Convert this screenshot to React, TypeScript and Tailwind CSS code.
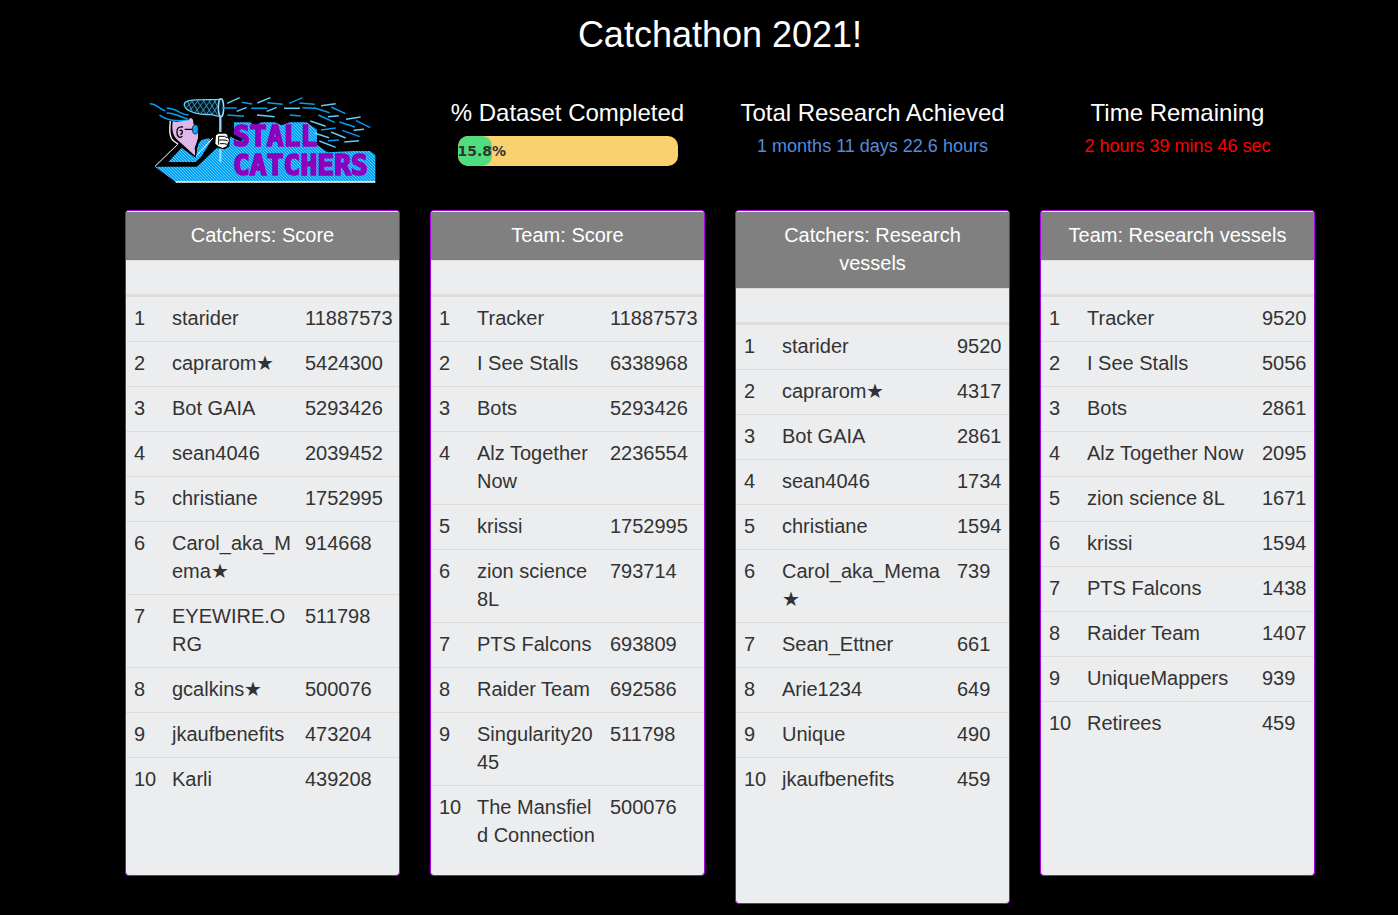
type Row = [name: string, value: number];

interface Board {
  title: string;
  valueColumn: string;
  rows: Row[];
}

const boards: Board[] = [
  {
    title: "Catchers: Score",
    valueColumn: "w-[102px]",
    rows: [
      ["starider", 11887573],
      ["caprarom★", 5424300],
      ["Bot GAIA", 5293426],
      ["sean4046", 2039452],
      ["christiane", 1752995],
      ["Carol_aka_Mema★", 914668],
      ["EYEWIRE.ORG", 511798],
      ["gcalkins★", 500076],
      ["jkaufbenefits", 473204],
      ["Karli", 439208],
    ],
  },
  {
    title: "Team: Score",
    valueColumn: "w-[102px]",
    rows: [
      ["Tracker", 11887573],
      ["I See Stalls", 6338968],
      ["Bots", 5293426],
      ["Alz Together Now", 2236554],
      ["krissi", 1752995],
      ["zion science 8L", 793714],
      ["PTS Falcons", 693809],
      ["Raider Team", 692586],
      ["Singularity2045", 511798],
      ["The Mansfield Connection", 500076],
    ],
  },
  {
    title: "Catchers: Research vessels",
    valueColumn: "w-[60px]",
    rows: [
      ["starider", 9520],
      ["caprarom★", 4317],
      ["Bot GAIA", 2861],
      ["sean4046", 1734],
      ["christiane", 1594],
      ["Carol_aka_Mema★", 739],
      ["Sean_Ettner", 661],
      ["Arie1234", 649],
      ["Unique", 490],
      ["jkaufbenefits", 459],
    ],
  },
  {
    title: "Team: Research vessels",
    valueColumn: "w-[60px]",
    rows: [
      ["Tracker", 9520],
      ["I See Stalls", 5056],
      ["Bots", 2861],
      ["Alz Together Now", 2095],
      ["zion science 8L", 1671],
      ["krissi", 1594],
      ["PTS Falcons", 1438],
      ["Raider Team", 1407],
      ["UniqueMappers", 939],
      ["Retirees", 459],
    ],
  },
];

function Logo() {
  return (
    <svg viewBox="0 0 750 330" width="250" height="110" role="img" aria-label="Stall Catchers" className="shrink-0">
      <defs>
        <pattern id="hatch" width="9" height="9" patternUnits="userSpaceOnUse">
          <rect width="9" height="9" fill="#009ff8" />
          <path d="M-3 -3L12 12M-3 6L3 12M6 -3L12 3" stroke="#62cbf3" strokeWidth="3" />
        </pattern>
      </defs>
      {/* shaded body and backdrop */}
      <path
        d="M45 245L112 180L165 217L176 167L205 160L222 172L245 186L262 184L268 150L305 172L282 150V112H330L345 122L365 112H405L425 121L450 112H500L531 134V180L562 202L640 198H690L706 211V291H107Z"
        fill="url(#hatch)"
      />
      <path d="M107 291H706" stroke="#fff" strokeWidth="4" />
      <path d="M262 144L282 148L310 160L303 170L266 153Z" fill="#000" />
      {/* flowing hair */}
      <g fill="none" stroke="#079ff0" strokeWidth="4.5" strokeLinecap="round">
        <path d="M31 56C48 55 50 67 74 77" />
        <path d="M82 70C106 68 118 88 144 90" />
        <path d="M82 84C105 82 116 97 142 101" />
        <path d="M60 91C80 105 99 109 146 106" />
      </g>
      {/* arm */}
      <path d="M112 178L45 245H171L242 178L225 148L184 215L167 231H85L125 188Z" fill="#000" />
      <path d="M45 244L113 178M220 158L165 216" fill="none" stroke="#fff" strokeWidth="3" />
      {/* head */}
      <path d="M92 108C88 137 88 157 101 168L114 177L167 218L170 190L180 166L160 108Z" fill="#000" />
      <path
        d="M98 109C95 132 98 153 112 164L165 212L165 190L174 168V134L160 116L159 104L152 98L145 106L110 110Z"
        fill="#deb8e9"
      />
      <path d="M91 108C88 137 88 157 101 168L114 177" fill="none" stroke="#fff" strokeWidth="4" />
      <path
        d="M129 126C115 123 109 132 111 145C112 157 122 161 127 153M119 137C129 132 130 145 121 149M134 133H160"
        fill="none"
        stroke="#000"
        strokeWidth="4"
      />
      <ellipse cx="166" cy="133" rx="9" ry="14" fill="#06a4f5" stroke="#000" strokeWidth="2" />
      <path d="M174 160L187 163L173 177L168 216L164 190Z" fill="#000" />
      {/* net */}
      <path d="M241 94V231" stroke="#8ed8f7" strokeWidth="7" />
      <path
        d="M239 43C207 45 177 43 148 47C132 50 129 59 136 68C147 83 183 90 210 88L237 94"
        fill="#001620"
        stroke="#77cff6"
        strokeWidth="4"
      />
      <path
        d="M144 51L157 80M155 47L178 86M171 46L198 87M189 45L216 88M206 45L232 89M222 45L237 72M159 47L139 67M176 46L149 76M194 45L165 83M212 45L182 86M229 44L200 87M237 57L216 88"
        fill="none"
        stroke="#4ba9d3"
        strokeWidth="2.5"
      />
      <ellipse cx="243" cy="68" rx="8" ry="27" fill="#001620" stroke="#9bddf8" strokeWidth="4.5" />
      {/* hand */}
      <path d="M219 149L235 141H263L270 150L268 184L254 193L233 190L221 180Z" fill="#000" />
      <path
        d="M228 151L236 146H258L262 151V158L266 162V170L263 175L260 184L248 189L235 184L226 176Z"
        fill="#fff"
      />
      <path
        d="M236 154H254L261 159M238 165H255L263 168M240 176H253L261 178M236 154V179"
        fill="none"
        stroke="#000"
        strokeWidth="3"
      />
      {/* swarm of vessels */}
      <g fill="none" strokeWidth="4.5">
        <path
          d="M261 55L299 38M352 54L391 38M290 79L320 67M380 79L410 67M432 70H480M351 90L404 95M543 62L587 56M564 95L596 92M618 103L662 96M511 108L557 124M641 136L672 133M523 144L567 158M538 168L587 187M573 141L617 159M613 171L657 167"
          stroke="#67caf5"
        />
        <path
          d="M305 52L337 57M246 69H290M333 70H382M382 53L428 58M448 55L487 38M478 54L524 58M487 68L524 70M262 90L312 94M449 90L482 93M522 68L569 83M574 66L616 86M535 90L584 112M598 111L645 126M648 107L691 128M543 135L587 129M607 136L659 155M564 167L597 165"
          stroke="#079ce9"
        />
      </g>
      <g
        fill="#8d00bd"
        stroke="#8d00bd"
        strokeWidth="5"
        fontFamily="'DejaVu Sans Mono', monospace"
        fontSize="84"
        fontWeight="700"
      >
        <text x="279" y="184">STALL</text>
        <text x="279" y="271">CATCHERS</text>
      </g>
    </svg>
  );
}

function Leaderboard({ title, valueColumn, rows }: Board) {
  return (
    <section className="overflow-hidden rounded border border-[#ae00e5] bg-[#ecedef]">
      <h2 className="border-t border-b border-t-white border-b-[#ddd] bg-[#808080] px-4 pt-[9px] pb-[11px] text-center text-xl leading-7 text-white">
        {title}
      </h2>
      <div className="min-h-[614px]">
        <table aria-label={title} className="w-full table-fixed border-separate border-spacing-0 text-left text-xl leading-7 text-[#333]">
          <thead>
            <tr>
              <th aria-label="Rank" className="h-9 w-[38px] border-b-3 border-[#ddd]" />
              <th aria-label="Name" className="border-b-3 border-[#ddd]" />
              <th aria-label="Total" className={`border-b-3 border-[#ddd] ${valueColumn}`} />
            </tr>
          </thead>
          <tbody className="[&>tr+tr>td]:border-t [&>tr+tr>td]:border-[#ddd]">
            {rows.map(([name, value], i) => (
              <tr key={name} className="align-top">
                <td className="pt-[7px] pb-[9px] pl-2">{i + 1}</td>
                <td className="pt-[7px] pr-1 pb-[9px] pl-2 break-all">{name}</td>
                <td className="pt-[7px] pb-[9px] pl-2">{value}</td>
              </tr>
            ))}
          </tbody>
        </table>
      </div>
    </section>
  );
}

export default function App() {
  return (
    <main className="min-h-screen bg-black pt-[15px] pr-[83px] pb-3 pl-[125px] font-['Liberation_Sans',Arial,sans-serif] text-white">
      <h1 className="text-center text-4xl leading-10">Catchathon 2021!</h1>

      <div className="mt-[30px] grid grid-cols-4 gap-x-[30px]">
        <div className="flex justify-end pr-[10px]">
          <Logo />
        </div>
        <div className="pt-[15px] text-center">
          <h2 id="completed" className="text-2xl leading-[26px] whitespace-nowrap">% Dataset Completed</h2>
          <div
            role="progressbar"
            aria-labelledby="completed"
            aria-valuenow={15.8}
            className="mx-auto mt-[10px] h-[30px] w-4/5 overflow-hidden rounded-[10px] bg-[#f9d16e]"
          >
            <div
              className="h-full rounded-[10px] bg-[#4fdd80] text-left font-['DejaVu_Sans',sans-serif] text-sm leading-[30px] font-bold text-[#333]"
              style={{ width: "15.8%" }}
            >
              15.8%
            </div>
          </div>
        </div>
        <div className="pt-[15px] text-center">
          <h2 className="text-2xl leading-[26px] whitespace-nowrap">Total Research Achieved</h2>
          <p className="mt-[10px] text-lg leading-5 text-[#548bdc]">1 months 11 days 22.6 hours</p>
        </div>
        <div className="pt-[15px] text-center">
          <h2 className="text-2xl leading-[26px] whitespace-nowrap">Time Remaining</h2>
          <p className="mt-[10px] text-lg leading-5 text-[#ff0000]">2 hours 39 mins 46 sec</p>
        </div>
      </div>

      <div className="mt-[15px] grid grid-cols-4 items-start gap-x-[30px]">
        {boards.map((board) => (
          <Leaderboard key={board.title} {...board} />
        ))}
      </div>
    </main>
  );
}
